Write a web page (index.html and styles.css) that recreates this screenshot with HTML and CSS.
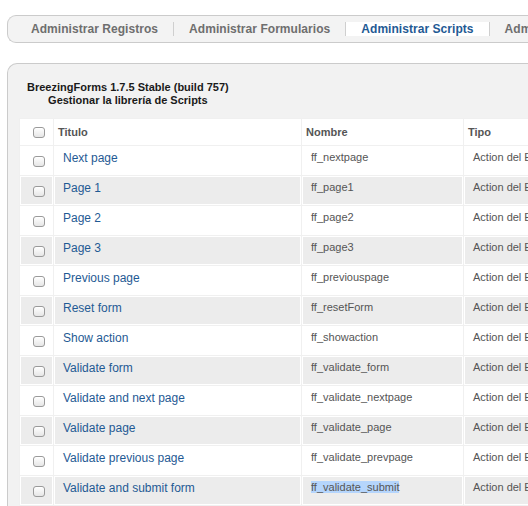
FILE: index.html
```html
<!DOCTYPE html>
<html lang="es">
<head>
<meta charset="utf-8">
<title>BreezingForms - Scripts</title>
<link rel="stylesheet" href="styles.css">
</head>
<body>
<div class="page">
  <div class="tabs">
    <a class="tab">Administrar Registros</a>
    <a class="tab">Administrar Formularios</a>
    <a class="tab active">Administrar Scripts</a>
    <a class="tab">Administrar Paquetes</a>
  </div>

  <div class="panel">
    <div class="heading">
      <div>BreezingForms 1.7.5 Stable (build 757)</div>
      <div>Gestionar la librería de Scripts</div>
    </div>

    <table class="list">
      <colgroup>
        <col class="c-check">
        <col class="c-title">
        <col class="c-name">
        <col class="c-type">
      </colgroup>
      <thead>
        <tr>
          <th class="check"><input type="checkbox" class="cb"></th>
          <th>Titulo</th>
          <th>Nombre</th>
          <th>Tipo</th>
        </tr>
      </thead>
      <tbody>
        <tr><td class="check"><input type="checkbox" class="cb"></td><td><a class="link">Next page</a></td><td class="name">ff_nextpage</td><td class="type">Action del Elemento</td></tr>
        <tr class="alt"><td class="check"><input type="checkbox" class="cb"></td><td><a class="link">Page 1</a></td><td class="name">ff_page1</td><td class="type">Action del Elemento</td></tr>
        <tr><td class="check"><input type="checkbox" class="cb"></td><td><a class="link">Page 2</a></td><td class="name">ff_page2</td><td class="type">Action del Elemento</td></tr>
        <tr class="alt"><td class="check"><input type="checkbox" class="cb"></td><td><a class="link">Page 3</a></td><td class="name">ff_page3</td><td class="type">Action del Elemento</td></tr>
        <tr><td class="check"><input type="checkbox" class="cb"></td><td><a class="link">Previous page</a></td><td class="name">ff_previouspage</td><td class="type">Action del Elemento</td></tr>
        <tr class="alt"><td class="check"><input type="checkbox" class="cb"></td><td><a class="link">Reset form</a></td><td class="name">ff_resetForm</td><td class="type">Action del Elemento</td></tr>
        <tr><td class="check"><input type="checkbox" class="cb"></td><td><a class="link">Show action</a></td><td class="name">ff_showaction</td><td class="type">Action del Elemento</td></tr>
        <tr class="alt"><td class="check"><input type="checkbox" class="cb"></td><td><a class="link">Validate form</a></td><td class="name">ff_validate_form</td><td class="type">Action del Elemento</td></tr>
        <tr><td class="check"><input type="checkbox" class="cb"></td><td><a class="link">Validate and next page</a></td><td class="name">ff_validate_nextpage</td><td class="type">Action del Elemento</td></tr>
        <tr class="alt"><td class="check"><input type="checkbox" class="cb"></td><td><a class="link">Validate page</a></td><td class="name">ff_validate_page</td><td class="type">Action del Elemento</td></tr>
        <tr><td class="check"><input type="checkbox" class="cb"></td><td><a class="link">Validate previous page</a></td><td class="name">ff_validate_prevpage</td><td class="type">Action del Elemento</td></tr>
        <tr class="alt"><td class="check"><input type="checkbox" class="cb"></td><td><a class="link">Validate and submit form</a></td><td class="name"><span class="selected">ff_validate_submit</span></td><td class="type">Action del Elemento</td></tr>
        <tr><td class="check"><input type="checkbox" class="cb"></td><td><a class="link">Validate and submit</a></td><td class="name">ff_validate_submit2</td><td class="type">Action del Elemento</td></tr>
      </tbody>
    </table>
  </div>
</div>
</body>
</html>
```

FILE: styles.css
```css
html, body {
  margin: 0;
  padding: 0;
  background: #ffffff;
}

body {
  width: 528px;
  height: 506px;
  overflow: hidden;
  font-family: "Liberation Sans", Arial, Helvetica, sans-serif;
}

.page {
  padding: 15px 0 0 7px;
  width: 700px;
}

/* ---------- tabs ---------- */
.tabs {
  display: flex;
  align-items: center;
  height: 26px;
  padding-left: 8px;
  background: #f3f3f3;
  border: 1px solid #cbcbcb;
  border-right: none;
  border-radius: 9px 0 0 9px;
  white-space: nowrap;
}

.tab {
  display: block;
  padding: 0 15px;
  line-height: 14px;
  font-size: 12px;
  letter-spacing: 0.05px;
  font-weight: bold;
  color: #6e6e6e;
  border-right: 1px solid #cfcfcf;
}

.tab.active {
  background: #ffffff;
  color: #1f5a94;
}

/* ---------- panel ---------- */
.panel {
  margin-top: 20px;
  background: #f2f2f2;
  border: 1px solid #cbcbcb;
  border-right: none;
  border-bottom: none;
  border-radius: 10px 0 0 0;
  padding: 17px 0 0 11px;
  height: 600px;
}

.heading {
  display: inline-block;
  margin-left: 8px;
  text-align: center;
  font-size: 11px;
  line-height: 13px;
  font-weight: bold;
  color: #1a1a1a;
}

/* ---------- table ---------- */
.list {
  margin-top: 10px;
  width: 566px;
  table-layout: fixed;
  border-collapse: separate;
  border-spacing: 1px;
  background: #f0f0f0;
}

.c-check { width: 33px; }
.c-title { width: 247px; }
.c-name { width: 161px; }
.c-type { width: 120px; }

.list th,
.list td {
  box-sizing: border-box;
  background: #ffffff;
  border: 1px solid #ffffff;
  text-align: left;
  white-space: nowrap;
  overflow: hidden;
}

.list th {
  height: 26px;
  padding: 0 3px;
  font-size: 11px;
  font-weight: bold;
  color: #555555;
  vertical-align: middle;
}

.list td {
  height: 29px;
  padding: 2px 8px 0 8px;
  vertical-align: top;
  line-height: 15px;
}

.list td.name,
.list td.type {
  padding-top: 3px;
}

.list tr.alt td {
  background: #ececec;
}

.list th.check,
.list td.check {
  padding: 0 0 0 12px;
  vertical-align: middle;
}

.list td.check {
  padding-top: 2px;
}

.link {
  font-size: 12px;
  color: #1f5a94;
  text-decoration: none;
}

.name,
.type {
  font-size: 11px;
  color: #555555;
}

.list td.name {
  padding-left: 8px;
}

.list td.type {
  padding-left: 8px;
}

.selected {
  background: #b5d5fc;
}

/* mac-like checkbox */
.cb {
  -webkit-appearance: none;
  appearance: none;
  display: block;
  margin: 0;
  width: 12px;
  height: 11px;
  border: 1px solid #9a9a9a;
  border-radius: 3px;
  background: linear-gradient(#ffffff, #e6e6e6);
  box-shadow: inset 0 1px 0 #ffffff;
}
```
